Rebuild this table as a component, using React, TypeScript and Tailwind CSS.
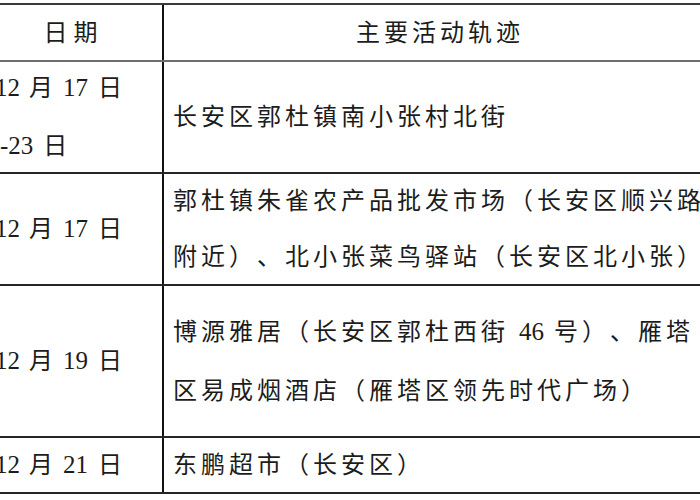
import type { ReactNode } from "react";

const FONT = "font-['Liberation_Serif','Noto_Sans_CJK_SC',serif]";

function Num({ children }: { children: ReactNode }) {
  return <span className="tracking-normal text-[25px]">{children}</span>;
}

// date like "12 月 17 日" with the gaps measured from the scan
function DateText({ m, d }: { m: string; d: string }) {
  return (
    <div>
      <Num>{m}</Num>
      <span className="ml-[9px] mr-[10px]">月</span>
      <Num>{d}</Num>
      <span className="ml-[10px]">日</span>
    </div>
  );
}

type Row = {
  h: string;
  lead: string;
  date: ReactNode;
  lines: ReactNode[];
};

const rows: Row[] = [
  {
    h: "h-[112px]",
    lead: "leading-[58px]",
    date: (
      <>
        <DateText m="12" d="17" />
        <div className="ml-[5px]">
          <Num>-23</Num>
          <span className="ml-[10px]">日</span>
        </div>
      </>
    ),
    lines: ["长安区郭杜镇南小张村北街"],
  },
  {
    h: "h-[112px]",
    lead: "leading-[56px]",
    date: <DateText m="12" d="17" />,
    lines: ["郭杜镇朱雀农产品批发市场（长安区顺兴路", "附近）、北小张菜鸟驿站（长安区北小张）"],
  },
  {
    h: "h-[152px]",
    lead: "leading-[59px]",
    date: <DateText m="12" d="19" />,
    lines: [
      <>
        博源雅居（长安区郭杜西街 <Num>46</Num> 号）、雁塔
      </>,
      "区易成烟酒店（雁塔区领先时代广场）",
    ],
  },
  {
    h: "h-[56px]",
    lead: "leading-[56px]",
    date: <DateText m="12" d="21" />,
    lines: ["东鹏超市（长安区）"],
  },
];

export default function App() {
  return (
    <div
      className={`w-[700px] h-[500px] overflow-hidden bg-white pt-[3px] text-[#1c1c1c] [text-spacing-trim:space-all] ${FONT}`}
    >
      <div className="ml-[-21px] w-[737px] border-t-2 border-[#3a3a3a]">
        {/* header */}
        <div className="grid grid-cols-[185px_1fr] grid-rows-1 h-[57px] border-b-2 border-[#6e6e6e]">
          <div className="flex items-center justify-center pl-[6px] border-r-2 border-[#111] text-[24px] tracking-[6px]">
            日期
          </div>
          <div className="flex items-center justify-center text-[24px] tracking-[4px]">主要活动轨迹</div>
        </div>
        {rows.map((r, i) => (
          <div key={i} className={`grid grid-cols-[185px_1fr] grid-rows-1 ${r.h} border-b-2 border-[#262626]`}>
            <div
              className={`flex flex-col justify-center pl-[16px] border-r-2 border-[#111] text-[24px] whitespace-nowrap ${r.lead}`}
            >
              {r.date}
            </div>
            <div
              className={`flex flex-col justify-center pl-[9px] text-[24px] tracking-[4px] whitespace-nowrap overflow-hidden ${r.lead}`}
            >
              {r.lines.map((l, j) => (
                <div key={j}>{l}</div>
              ))}
            </div>
          </div>
        ))}
      </div>
    </div>
  );
}
